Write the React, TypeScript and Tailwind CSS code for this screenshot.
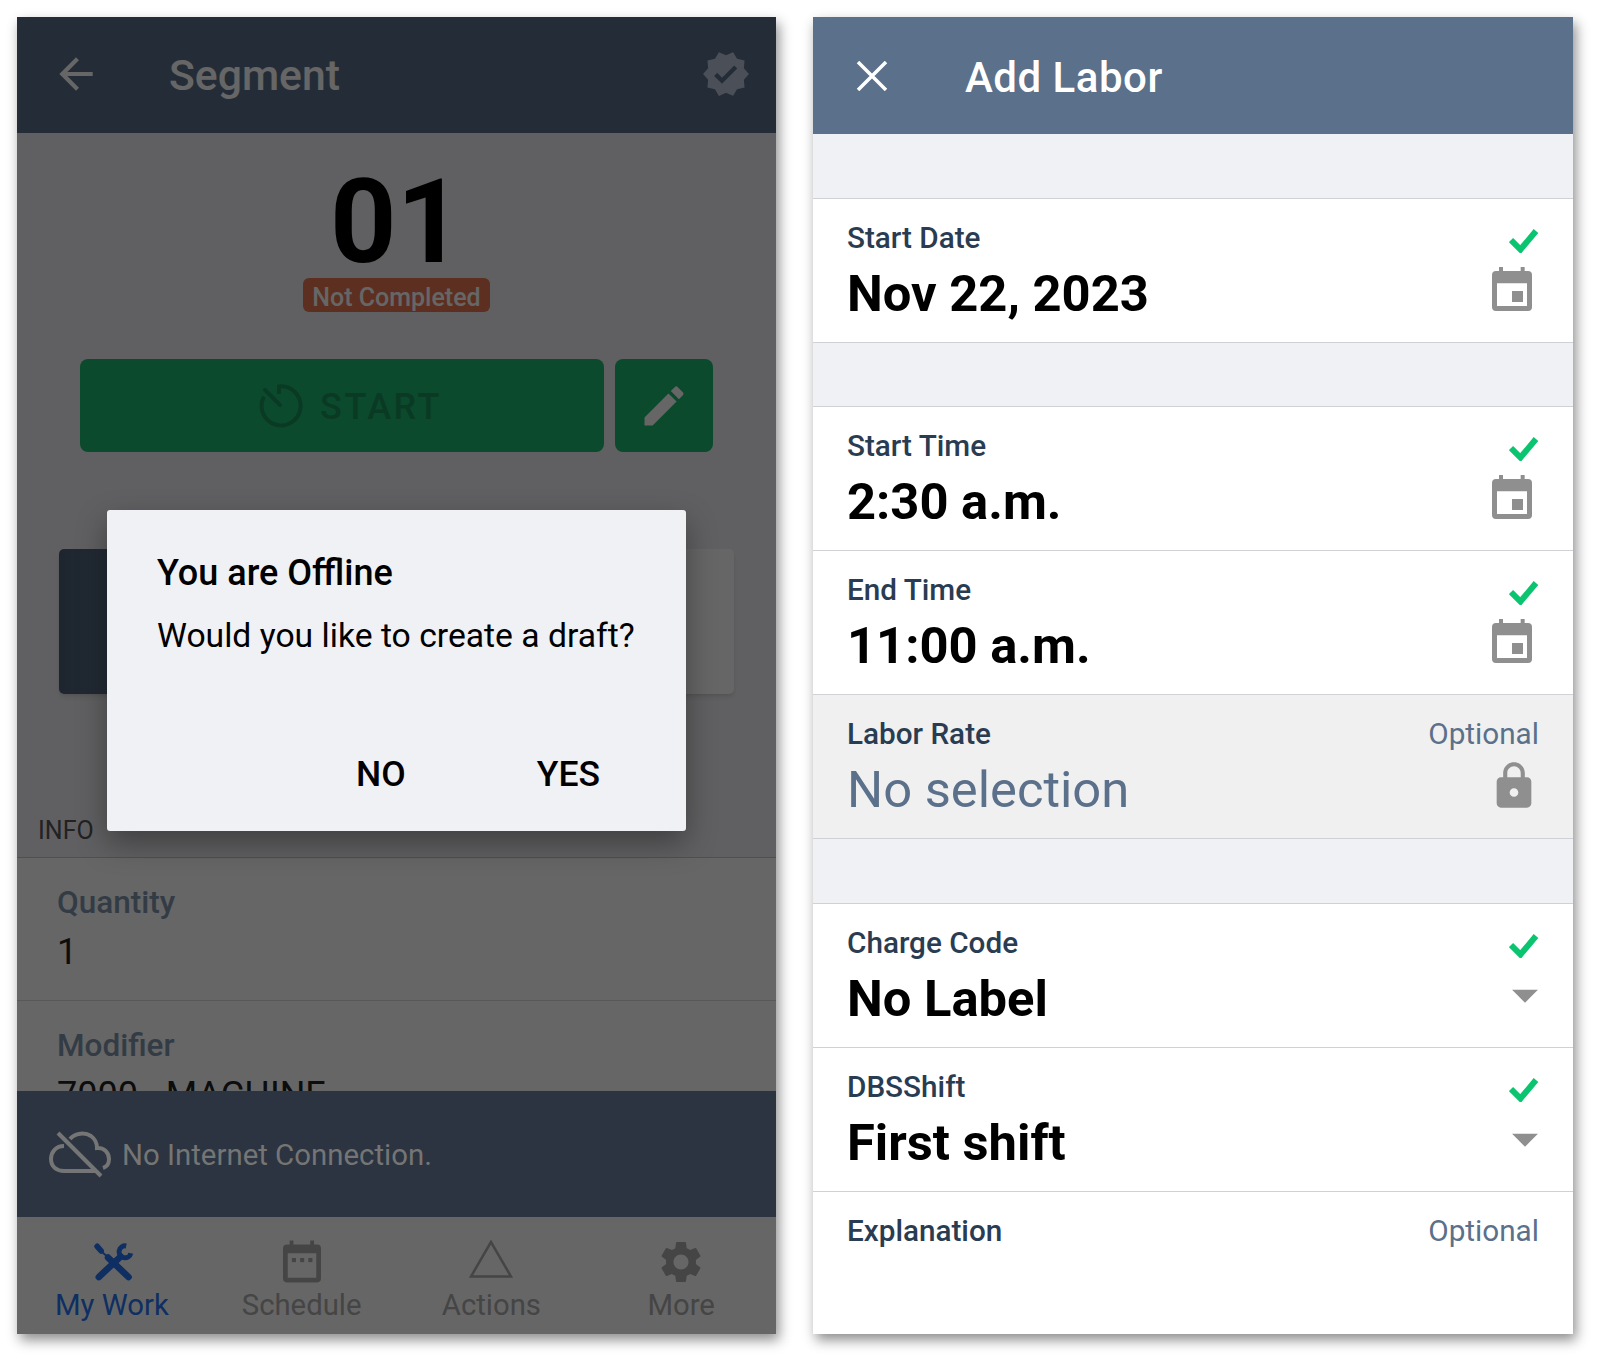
import { MdArrowBack, MdEdit, MdLock, MdOutlineArrowDropDown, MdSettings, MdVerified } from "react-icons/md";

function CalendarIcon({ className }: { className: string }) {
  return (
    <svg viewBox="0 0 120 132" className={className} fill="currentColor">
      <path
        fillRule="evenodd"
        d="M21 0h12v12h53V0h12v12h10a12 12 0 0 1 12 12v96a12 12 0 0 1-12 12H12a12 12 0 0 1-12-12V24a12 12 0 0 1 12-12h9zM15 49v68h90V49zM60 72h33v33H60z"
      />
    </svg>
  );
}

function ScheduleIcon({ className }: { className: string }) {
  return (
    <svg viewBox="0 0 120 132" className={className} fill="currentColor">
      <path
        fillRule="evenodd"
        d="M21 0h12v12h53V0h12v12h10a12 12 0 0 1 12 12v96a12 12 0 0 1-12 12H12a12 12 0 0 1-12-12V24a12 12 0 0 1 12-12h9zM15 40v77h90V40z"
      />
      <rect x="28" y="55" width="13" height="13" />
      <rect x="54" y="55" width="13" height="13" />
      <rect x="80" y="55" width="13" height="13" />
    </svg>
  );
}

function ToolsIcon({ className }: { className: string }) {
  return (
    <svg viewBox="0 0 120 115" className={className} fill="none" stroke="currentColor" strokeLinecap="round">
      <path d="M9 10l12 14" strokeWidth="17" />
      <path d="M20 24l24 21" strokeWidth="6" />
      <path d="M42 44l62 59" strokeWidth="20" />
      <path d="M14 103l66-62" strokeWidth="20" />
      <path d="M97 9A18 18 0 1 0 111 31" strokeWidth="15" strokeLinecap="butt" />
    </svg>
  );
}

function TimerIcon({ className }: { className: string }) {
  return (
    <svg viewBox="0 0 46 46" className={className} fill="none" stroke="currentColor" strokeWidth="4">
      <path d="M21 11V3.500A19.500 19.500 0 1 1 6 13.500" />
      <path d="M7 7l15 15" strokeLinecap="round" />
    </svg>
  );
}

function CloudOffIcon({ className }: { className: string }) {
  return (
    <svg viewBox="0 0 64 48" className={className} fill="none" stroke="currentColor" strokeWidth="4">
      <path d="M16 15C8 15 3 21 3 28c0 8 6 12 13 12h31" />
      <path d="M22 8c5-6 15-7 21-3 4 3 6 8 6 12 7-1 12 5 12 11 0 5-3 8-6 9" />
      <path d="M10 2l43 43" />
    </svg>
  );
}

function CheckIcon() {
  return (
    <svg viewBox="0 0 30 24" className="w-[30px] h-[24px] text-[#0ac46f]" fill="none" stroke="currentColor" strokeWidth="6">
      <path d="M2 11l9.500 9.500L27 2" />
    </svg>
  );
}

function Spacer({ short }: { short?: boolean }) {
  return <div className={`${short ? "h-[64px]" : "h-[65px]"} bg-[#f0f1f5] border-b border-[#cfd1d6]`} />;
}

function FormRow({
  label,
  value,
  kind,
}: {
  label: string;
  value: string;
  kind: "date" | "select" | "locked";
}) {
  const locked = kind === "locked";
  return (
    <div className={`h-[144px] flex justify-between pl-[34px] pr-[34px] pt-[19px] border-b border-[#cfd1d6] ${locked ? "bg-[#f0f0f0]" : "bg-white"}`}>
      <div>
        <div className="text-[29.700px] leading-[40px] font-medium text-[#2a3c52]">{label}</div>
        <div className={`mt-[4px] text-[50.700px] leading-[64px] ${locked ? "text-[#5b708a]" : "font-bold text-black"}`}>{value}</div>
      </div>
      <div className="flex flex-col items-end">
        {locked ? (
          <div className="text-[29.700px] leading-[40px] text-[#5b708a]">Optional</div>
        ) : (
          <div className="pt-[11px] h-[47px]"><CheckIcon /></div>
        )}
        {kind === "date" && <CalendarIcon className="w-[40px] h-[44px] mt-[2px] mr-[7px] text-[#8f8f8f]" />}
        {kind === "select" && <MdOutlineArrowDropDown className="text-[62px] -mr-[17px] -mt-[6px] text-[#8f8f8f]" />}
        {locked && <MdLock className="text-[52px] mt-[6px] mr-[-1px] text-[#8f8f8f]" />}
      </div>
    </div>
  );
}

function SegmentPanel() {
  return (
    <div className="relative w-[759px] h-[1317px] flex flex-col overflow-hidden bg-[#f0f1f5] shadow-[3px_6px_12px_rgba(0,0,0,0.45)]">
      <div className="h-[116px] shrink-0 flex items-center bg-[#5b708a] text-white pl-[34px] pr-[25px]">
        <MdArrowBack className="text-[50px] -mt-[3px]" />
        <span className="ml-[68px] text-[42.700px] font-medium">Segment</span>
        <MdVerified className="ml-auto text-[50px] -mt-[2px] text-[#bbc8dc]" />
      </div>

      <div className="flex-1 min-h-0 overflow-hidden">
        <div className="mt-[39px] h-[100px] flex items-center justify-center text-[116px] font-bold text-black leading-[100px]">01</div>
        <div className="mt-[6px] flex justify-center">
          <span className="h-[34px] w-[187px] rounded-[6px] bg-[#e57550] text-white text-[25px] leading-[39px] font-medium text-center">
            Not Completed
          </span>
        </div>
        <div className="mt-[47px] ml-[63px] flex gap-[11px]">
          <div className="w-[524px] h-[93px] rounded-[8px] bg-[#1cb96e] pl-[16px] flex items-center justify-center gap-[16px] text-[#19915b]">
            <TimerIcon className="w-[46px] h-[46px]" />
            <span className="text-[36px] mt-[3px] font-medium tracking-[2.500px]">START</span>
          </div>
          <div className="w-[98px] h-[93px] rounded-[8px] bg-[#1cb96e] flex items-center justify-center text-white">
            <MdEdit className="text-[52px]" />
          </div>
        </div>
        <div className="mt-[97px] mx-[42px] h-[145px] rounded-[5px] overflow-hidden bg-white shadow-md">
          <div className="w-[60px] h-full bg-gradient-to-r from-[#4a5d73] to-[#5b708a]" />
        </div>
        <div className="h-[164px] flex items-end px-[21px] pb-[11px] border-b border-[#c8c8c8] text-[25px] leading-[30px] text-[#555]">INFO</div>
        <div className="bg-white">
          <div className="h-[143px] pl-[40px] pt-[25px] border-b border-[#dddddd]">
            <div className="text-[31.500px] leading-[40px] font-medium text-[#7f96ad]">Quantity</div>
            <div className="mt-[9px] text-[36px] leading-[40px] text-[#222]">1</div>
          </div>
          <div className="h-[143px] pl-[40px] pt-[25px]">
            <div className="text-[31.500px] leading-[40px] font-medium text-[#7f96ad]">Modifier</div>
            <div className="mt-[9px] text-[36px] leading-[40px] text-[#222]">7000 - MACHINE</div>
          </div>
        </div>
      </div>

      <div className="relative z-20 h-[126px] shrink-0 flex items-center bg-[#2b3440] pl-[31px] text-[#757575]">
        <CloudOffIcon className="w-[64px] h-[48px] mt-[2px]" />
        <span className="ml-[10px] mt-[3px] text-[29.400px]">No Internet Connection.</span>
      </div>

      <div className="h-[117px] shrink-0 grid grid-cols-4 bg-white pt-[21px] text-[#adadad]">
        <div className="flex flex-col items-center text-[#2676f8]">
          <div className="h-[47px] pl-[4px] flex items-center"><ToolsIcon className="w-[40px] h-[38px]" /></div>
          <span className="text-[29.300px] leading-[40px]">My Work</span>
        </div>
        <div className="flex flex-col items-center">
          <div className="h-[47px] flex items-center"><ScheduleIcon className="w-[38px] h-[43px]" /></div>
          <span className="text-[29.300px] leading-[40px]">Schedule</span>
        </div>
        <div className="flex flex-col items-center">
          <div className="h-[47px] flex items-start pt-[2px]">
            <svg viewBox="0 0 44 38" className="w-[44px] h-[38px]" fill="none" stroke="currentColor" strokeWidth="2.500">
              <path d="M22 2L2 36.500h40z" />
            </svg>
          </div>
          <span className="text-[29.300px] leading-[40px]">Actions</span>
        </div>
        <div className="flex flex-col items-center">
          <div className="h-[47px] flex items-center"><MdSettings className="text-[50px]" /></div>
          <span className="text-[29.300px] leading-[40px]">More</span>
        </div>
      </div>

      {/* dim layer + offline dialog */}
      <div className="absolute inset-0 z-10 bg-black/60" />
      <div className="absolute z-30 left-[90px] top-[493px] w-[579px] h-[321px] rounded-[3px] bg-[#f0f1f5] pl-[50px] pt-[42px] shadow-[0_12px_30px_rgba(0,0,0,0.35)]">
        <div className="text-[36px] leading-[42px] font-medium text-black">You are Offline</div>
        <div className="mt-[22px] text-[33.700px] leading-[40px] text-black">Would you like to create a draft?</div>
        <div className="mt-[98px] flex justify-end gap-[131px] pr-[86px] text-[35.500px] leading-[40px] font-medium text-black">
          <span>NO</span>
          <span>YES</span>
        </div>
      </div>
    </div>
  );
}

function LaborPanel() {
  return (
    <div className="w-[760px] h-[1317px] flex flex-col overflow-hidden bg-white shadow-[3px_6px_12px_rgba(0,0,0,0.45)]">
      <div className="h-[117px] shrink-0 flex items-center bg-[#5b708a] text-white pl-[43px]">
        <svg viewBox="0 0 32 30" className="w-[32px] h-[30px]" fill="none" stroke="currentColor" strokeWidth="3.500">
          <path d="M2 1l28 28M30 1L2 29" />
        </svg>
        <span className="ml-[77px] mt-[3px] text-[42px] font-medium tracking-[0.5px]">Add Labor</span>
      </div>
      <Spacer />
      <FormRow label="Start Date" value="Nov 22, 2023" kind="date" />
      <Spacer short />
      <FormRow label="Start Time" value="2:30 a.m." kind="date" />
      <FormRow label="End Time" value="11:00 a.m." kind="date" />
      <FormRow label="Labor Rate" value="No selection" kind="locked" />
      <Spacer />
      <FormRow label="Charge Code" value="No Label" kind="select" />
      <FormRow label="DBSShift" value="First shift" kind="select" />
      <div className="flex justify-between px-[34px] pt-[19px] text-[29.700px] leading-[40px]">
        <span className="font-medium text-[#2a3c52]">Explanation</span>
        <span className="text-[#5b708a]">Optional</span>
      </div>
    </div>
  );
}

export default function App() {
  return (
    <div className="w-[1600px] h-[1366px] bg-white flex gap-[37px] pl-[17px] pt-[17px] font-['Roboto',sans-serif]">
      <SegmentPanel />
      <LaborPanel />
    </div>
  );
}
